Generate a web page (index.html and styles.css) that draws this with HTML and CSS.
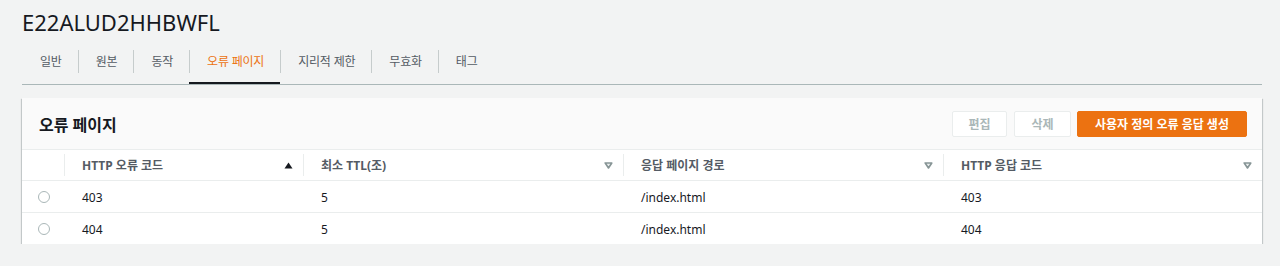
FILE: index.html
```html
<!DOCTYPE html>
<html>
<head>
    <title>E22ALUD2HHBWFL</title>
    <link rel="stylesheet" href="styles.css">
</head>
<body>
    <div class="page">
        <h1 class="title">E22ALUD2HHBWFL</h1>

        <div class="tabs">
            <a class="tab">일반</a>
            <a class="tab">원본</a>
            <a class="tab">동작</a>
            <a class="tab active">오류 페이지</a>
            <a class="tab">지리적 제한</a>
            <a class="tab">무효화</a>
            <a class="tab">태그</a>
        </div>

        <div class="card">
            <div class="card-header">
                <h2>오류 페이지</h2>
                <div class="actions">
                    <button class="btn" disabled>편집</button>
                    <button class="btn btn-delete" disabled>삭제</button>
                    <button class="btn btn-primary">사용자 정의 오류 응답 생성</button>
                </div>
            </div>
            <table class="grid">
                <colgroup>
                    <col class="c-sel">
                    <col class="c-code">
                    <col class="c-ttl">
                    <col class="c-path">
                    <col class="c-resp">
                </colgroup>
                <thead>
                    <tr>
                        <th></th>
                        <th><div class="th"><span>HTTP 오류 코드</span>
                            <svg class="sort" width="9" height="7" viewBox="0 0 9 7"><path d="M0.5 6.5 L4.5 0.5 L8.5 6.5 Z" fill="#16191f"/></svg></div></th>
                        <th><div class="th"><span>최소 TTL(조)</span>
                            <svg class="sort" width="9" height="7" viewBox="0 0 9 7"><path d="M1.2 1 L7.8 1 L4.5 6 Z" fill="#eaeded" stroke="#879596" stroke-width="1.6" stroke-linejoin="round"/></svg></div></th>
                        <th><div class="th"><span>응답 페이지 경로</span>
                            <svg class="sort" width="9" height="7" viewBox="0 0 9 7"><path d="M1.2 1 L7.8 1 L4.5 6 Z" fill="#eaeded" stroke="#879596" stroke-width="1.6" stroke-linejoin="round"/></svg></div></th>
                        <th><div class="th"><span>HTTP 응답 코드</span>
                            <svg class="sort" width="9" height="7" viewBox="0 0 9 7"><path d="M1.2 1 L7.8 1 L4.5 6 Z" fill="#eaeded" stroke="#879596" stroke-width="1.6" stroke-linejoin="round"/></svg></div></th>
                    </tr>
                </thead>
                <tbody>
                    <tr>
                        <td><span class="radio"></span></td>
                        <td>403</td>
                        <td>5</td>
                        <td>/index.html</td>
                        <td>403</td>
                    </tr>
                    <tr>
                        <td><span class="radio"></span></td>
                        <td>404</td>
                        <td>5</td>
                        <td>/index.html</td>
                        <td>404</td>
                    </tr>
                </tbody>
            </table>
        </div>
    </div>
</body>
</html>
```

FILE: styles.css
```css
body {
    margin: 0;
    background-color: #f2f3f3;
    font-family: "Noto Sans", "Noto Sans CJK KR", sans-serif;
    color: #16191f;
}
.page {
    padding: 8px 18px 0 22px;
}
.title {
    margin: 0;
    font-size: 22px;
    font-weight: normal;
    line-height: 28px;
    color: #16191f;
}
.tabs {
    display: flex;
    margin-top: 11px;
    border-bottom: 1px solid #aab7b8;
}
.tab {
    padding: 0 16px 0 17px;
    margin: 3px 0 11px;
    font-size: 12px;
    letter-spacing: -0.2px;
    line-height: 23px;
    color: #545b64;
    border-left: 1px solid #c6cccc;
}
.tab:first-child {
    border-left: none;
    padding-left: 18px;
}
.tab.active {
    color: #ec7211;
    position: relative;
}
.tab.active::after {
    content: "";
    position: absolute;
    left: -1px;
    right: 0;
    bottom: -11px;
    height: 2px;
    background: #16191f;
}
.card {
    margin-top: 13px;
    background: #fff;
    box-shadow: 0 1px 1px 0 rgba(0,28,36,0.3), 1px 1px 1px 0 rgba(0,28,36,0.15), -1px 1px 1px 0 rgba(0,28,36,0.15);
}
.card-header {
    display: flex;
    align-items: center;
    justify-content: space-between;
    height: 51px;
    padding: 0 15px 0 17px;
    background: #fafafa;
    border-bottom: 1px solid #eaeded;
}
.card-header h2 {
    margin: 0;
    font-size: 16px;
    font-weight: bold;
    color: #16191f;
}
.actions {
    display: flex;
    gap: 7px;
}
.btn {
    height: 26px;
    width: 55px;
    padding: 0;
    font-family: inherit;
    font-size: 12px;
    font-weight: bold;
    color: #aab7b8;
    background: #fff;
    border: 1px solid #eaeded;
    border-radius: 2px;
}
.btn-delete {
    width: 57px;
}
.btn-primary {
    width: 170px;
    margin-left: -1px;
    color: #fff;
    background: #ec7211;
    border-color: #ec7211;
}
.grid {
    width: 100%;
    border-collapse: collapse;
    table-layout: fixed;
    font-size: 12px;
}
.c-sel { width: 42px; }
.c-code { width: 239px; }
.c-ttl { width: 320px; }
.c-path { width: 320px; }
th {
    height: 30px;
    padding: 0;
    text-align: left;
    font-weight: bold;
    color: #545b64;
    border-bottom: 1px solid #eaeded;
}
.th {
    display: flex;
    justify-content: space-between;
    align-items: center;
    padding: 0 10px 0 17px;
    height: 22px;
    border-left: 1px solid #eaeded;
}
th:nth-child(5) .th {
    padding-right: 10px;
}
.sort {
    flex: none;
    margin-top: 1px;
}
td {
    height: 30px;
    padding: 1px 0 0 18px;
    border-bottom: 1px solid #eaeded;
}
td:first-child {
    padding-left: 16px;
}
tbody tr:last-child td {
    border-bottom: none;
}
.radio {
    display: block;
    width: 10px;
    height: 10px;
    border: 1px solid #aab7b8;
    border-radius: 50%;
}
```
